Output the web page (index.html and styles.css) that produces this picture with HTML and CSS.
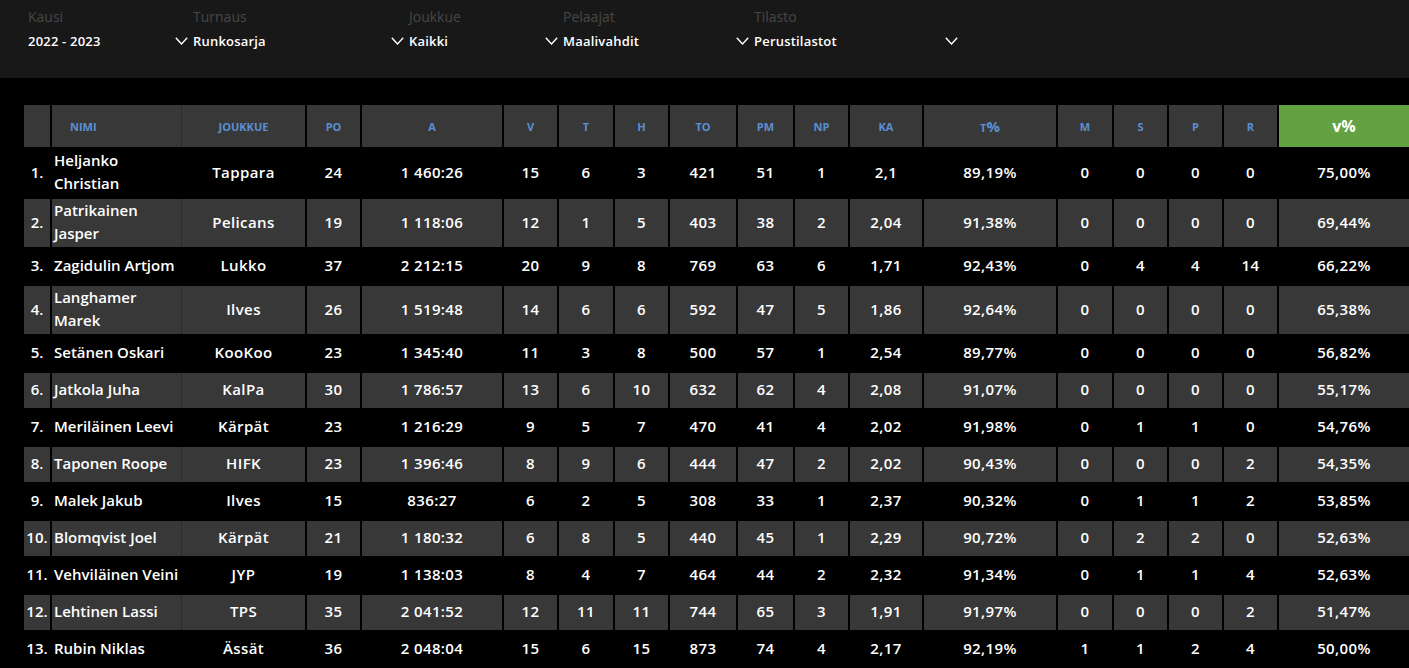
FILE: index.html
```html
<!DOCTYPE html>
<html lang="fi">
<head>
<meta charset="utf-8">
<title>Tilastot</title>
<link rel="stylesheet" href="styles.css">
</head>
<body>
<header class="filters">
  <div class="filter f-kausi">
    <div class="label">Kausi</div>
    <div class="select"><span>2022 - 2023</span><svg class="chev" viewBox="0 0 13 8"><polyline points="0.8,0.8 6.5,7 12.2,0.8"/></svg></div>
  </div>
  <div class="filter f-turnaus">
    <div class="label">Turnaus</div>
    <div class="select"><span>Runkosarja</span><svg class="chev" viewBox="0 0 13 8"><polyline points="0.8,0.8 6.5,7 12.2,0.8"/></svg></div>
  </div>
  <div class="filter f-joukkue">
    <div class="label">Joukkue</div>
    <div class="select"><span>Kaikki</span><svg class="chev" viewBox="0 0 13 8"><polyline points="0.8,0.8 6.5,7 12.2,0.8"/></svg></div>
  </div>
  <div class="filter f-pelaajat">
    <div class="label">Pelaajat</div>
    <div class="select"><span>Maalivahdit</span><svg class="chev" viewBox="0 0 13 8"><polyline points="0.8,0.8 6.5,7 12.2,0.8"/></svg></div>
  </div>
  <div class="filter f-tilasto">
    <div class="label">Tilasto</div>
    <div class="select"><span>Perustilastot</span><svg class="chev" viewBox="0 0 13 8"><polyline points="0.8,0.8 6.5,7 12.2,0.8"/></svg></div>
  </div>
</header>

<main class="stats">
  <div class="row head">
    <div class="c rank"></div>
    <div class="c name">NIMI</div>
    <div class="c team">JOUKKUE</div>
    <div class="c po">PO</div>
    <div class="c a">A</div>
    <div class="c v">V</div>
    <div class="c t">T</div>
    <div class="c h">H</div>
    <div class="c to">TO</div>
    <div class="c pm">PM</div>
    <div class="c np">NP</div>
    <div class="c ka">KA</div>
    <div class="c tp big"><span class="sc">T</span>%</div>
    <div class="c m">M</div>
    <div class="c s">S</div>
    <div class="c p">P</div>
    <div class="c r">R</div>
    <div class="c vp active">v%</div>
  </div>

  <div class="row"><div class="c rank">1.</div><div class="c name">Heljanko Christian</div><div class="c team">Tappara</div><div class="c po">24</div><div class="c a">1 460:26</div><div class="c v">15</div><div class="c t">6</div><div class="c h">3</div><div class="c to">421</div><div class="c pm">51</div><div class="c np">1</div><div class="c ka">2,1</div><div class="c tp">89,19%</div><div class="c m">0</div><div class="c s">0</div><div class="c p">0</div><div class="c r">0</div><div class="c vp">75,00%</div></div>

  <div class="row alt"><div class="c rank">2.</div><div class="c name">Patrikainen Jasper</div><div class="c team">Pelicans</div><div class="c po">19</div><div class="c a">1 118:06</div><div class="c v">12</div><div class="c t">1</div><div class="c h">5</div><div class="c to">403</div><div class="c pm">38</div><div class="c np">2</div><div class="c ka">2,04</div><div class="c tp">91,38%</div><div class="c m">0</div><div class="c s">0</div><div class="c p">0</div><div class="c r">0</div><div class="c vp">69,44%</div></div>

  <div class="row"><div class="c rank">3.</div><div class="c name">Zagidulin Artjom</div><div class="c team">Lukko</div><div class="c po">37</div><div class="c a">2 212:15</div><div class="c v">20</div><div class="c t">9</div><div class="c h">8</div><div class="c to">769</div><div class="c pm">63</div><div class="c np">6</div><div class="c ka">1,71</div><div class="c tp">92,43%</div><div class="c m">0</div><div class="c s">4</div><div class="c p">4</div><div class="c r">14</div><div class="c vp">66,22%</div></div>

  <div class="row alt"><div class="c rank">4.</div><div class="c name">Langhamer Marek</div><div class="c team">Ilves</div><div class="c po">26</div><div class="c a">1 519:48</div><div class="c v">14</div><div class="c t">6</div><div class="c h">6</div><div class="c to">592</div><div class="c pm">47</div><div class="c np">5</div><div class="c ka">1,86</div><div class="c tp">92,64%</div><div class="c m">0</div><div class="c s">0</div><div class="c p">0</div><div class="c r">0</div><div class="c vp">65,38%</div></div>

  <div class="row"><div class="c rank">5.</div><div class="c name">Setänen Oskari</div><div class="c team">KooKoo</div><div class="c po">23</div><div class="c a">1 345:40</div><div class="c v">11</div><div class="c t">3</div><div class="c h">8</div><div class="c to">500</div><div class="c pm">57</div><div class="c np">1</div><div class="c ka">2,54</div><div class="c tp">89,77%</div><div class="c m">0</div><div class="c s">0</div><div class="c p">0</div><div class="c r">0</div><div class="c vp">56,82%</div></div>

  <div class="row alt"><div class="c rank">6.</div><div class="c name">Jatkola Juha</div><div class="c team">KalPa</div><div class="c po">30</div><div class="c a">1 786:57</div><div class="c v">13</div><div class="c t">6</div><div class="c h">10</div><div class="c to">632</div><div class="c pm">62</div><div class="c np">4</div><div class="c ka">2,08</div><div class="c tp">91,07%</div><div class="c m">0</div><div class="c s">0</div><div class="c p">0</div><div class="c r">0</div><div class="c vp">55,17%</div></div>

  <div class="row"><div class="c rank">7.</div><div class="c name">Meriläinen Leevi</div><div class="c team">Kärpät</div><div class="c po">23</div><div class="c a">1 216:29</div><div class="c v">9</div><div class="c t">5</div><div class="c h">7</div><div class="c to">470</div><div class="c pm">41</div><div class="c np">4</div><div class="c ka">2,02</div><div class="c tp">91,98%</div><div class="c m">0</div><div class="c s">1</div><div class="c p">1</div><div class="c r">0</div><div class="c vp">54,76%</div></div>

  <div class="row alt"><div class="c rank">8.</div><div class="c name">Taponen Roope</div><div class="c team">HIFK</div><div class="c po">23</div><div class="c a">1 396:46</div><div class="c v">8</div><div class="c t">9</div><div class="c h">6</div><div class="c to">444</div><div class="c pm">47</div><div class="c np">2</div><div class="c ka">2,02</div><div class="c tp">90,43%</div><div class="c m">0</div><div class="c s">0</div><div class="c p">0</div><div class="c r">2</div><div class="c vp">54,35%</div></div>

  <div class="row"><div class="c rank">9.</div><div class="c name">Malek Jakub</div><div class="c team">Ilves</div><div class="c po">15</div><div class="c a">836:27</div><div class="c v">6</div><div class="c t">2</div><div class="c h">5</div><div class="c to">308</div><div class="c pm">33</div><div class="c np">1</div><div class="c ka">2,37</div><div class="c tp">90,32%</div><div class="c m">0</div><div class="c s">1</div><div class="c p">1</div><div class="c r">2</div><div class="c vp">53,85%</div></div>

  <div class="row alt"><div class="c rank">10.</div><div class="c name">Blomqvist Joel</div><div class="c team">Kärpät</div><div class="c po">21</div><div class="c a">1 180:32</div><div class="c v">6</div><div class="c t">8</div><div class="c h">5</div><div class="c to">440</div><div class="c pm">45</div><div class="c np">1</div><div class="c ka">2,29</div><div class="c tp">90,72%</div><div class="c m">0</div><div class="c s">2</div><div class="c p">2</div><div class="c r">0</div><div class="c vp">52,63%</div></div>

  <div class="row"><div class="c rank">11.</div><div class="c name">Vehviläinen Veini</div><div class="c team">JYP</div><div class="c po">19</div><div class="c a">1 138:03</div><div class="c v">8</div><div class="c t">4</div><div class="c h">7</div><div class="c to">464</div><div class="c pm">44</div><div class="c np">2</div><div class="c ka">2,32</div><div class="c tp">91,34%</div><div class="c m">0</div><div class="c s">1</div><div class="c p">1</div><div class="c r">4</div><div class="c vp">52,63%</div></div>

  <div class="row alt"><div class="c rank">12.</div><div class="c name">Lehtinen Lassi</div><div class="c team">TPS</div><div class="c po">35</div><div class="c a">2 041:52</div><div class="c v">12</div><div class="c t">11</div><div class="c h">11</div><div class="c to">744</div><div class="c pm">65</div><div class="c np">3</div><div class="c ka">1,91</div><div class="c tp">91,97%</div><div class="c m">0</div><div class="c s">0</div><div class="c p">0</div><div class="c r">2</div><div class="c vp">51,47%</div></div>

  <div class="row"><div class="c rank">13.</div><div class="c name">Rubin Niklas</div><div class="c team">Ässät</div><div class="c po">36</div><div class="c a">2 048:04</div><div class="c v">15</div><div class="c t">6</div><div class="c h">15</div><div class="c to">873</div><div class="c pm">74</div><div class="c np">4</div><div class="c ka">2,17</div><div class="c tp">92,19%</div><div class="c m">1</div><div class="c s">1</div><div class="c p">2</div><div class="c r">4</div><div class="c vp">50,00%</div></div>
</main>
</body>
</html>
```

FILE: styles.css
```css
* { box-sizing: border-box; }

html, body {
  margin: 0;
  padding: 0;
  background: #000;
  color: #fff;
  font-family: "Open Sans", "Liberation Sans", sans-serif;
}

/* ---------- filter bar ---------- */
.filters {
  display: flex;
  gap: 5px;
  height: 78px;
  padding: 7px 0 0 28px;
  background: #181818;
}

.filter .label {
  font-size: 14px;
  line-height: 20px;
  color: #474747;
}

.filter .select {
  display: flex;
  align-items: center;
  justify-content: space-between;
  margin-top: 4px;
  height: 20px;
  font-size: 13px;
  font-weight: 600;
  letter-spacing: 0.2px;
  color: #fff;
}

.chev {
  width: 13px;
  height: 8px;
  fill: none;
  stroke: #fff;
  stroke-width: 1.4;
}

.f-kausi   { width: 160px; }
.f-turnaus { width: 211px; }
.f-joukkue { width: 149px; }
.f-pelaajat { width: 186px; }
.f-tilasto { width: 204px; }

/* ---------- table ---------- */
.stats {
  display: flex;
  flex-direction: column;
  gap: 2px;
  padding: 27px 0 0 24px;
}

.row {
  display: flex;
  gap: 2px;
  min-height: 35px;
  font-size: 15px;
  font-weight: 600;
  line-height: 23px;
}

.c {
  flex: none;
  display: flex;
  align-items: center;
  justify-content: center;
  text-align: center;
  white-space: nowrap;
  padding-bottom: 2px;
  letter-spacing: 0.4px;
}

.row.alt .c,
.row.head .c { background: #383838; }

.row.head {
  height: 42px;
  font-size: 11px;
  font-weight: 700;
  color: #5b8fd2;
}
.row.head .c { padding-bottom: 0; letter-spacing: 0; }

.row.head .c.big { font-size: 15px; }
.row.head .sc { font-size: 11px; margin-top: 2px; }
.row.head .c.active {
  background: #63a142;
  color: #fff;
  font-size: 16px;
}

.rank { width: 26px; letter-spacing: 0; }
.name {
  width: 130px;
  justify-content: flex-start;
  text-align: left;
  white-space: normal;
  padding: 0 0 2px 2px;
  letter-spacing: 0;
  border-right: 1px solid transparent;
}
.row.alt .name,
.row.head .name { border-right-color: #2b2b2b; }
.row.head .name { padding-left: 18px; }
.team { width: 123px; margin-left: -2px; }
.po { width: 53px; }
.a  { width: 140px; }
.v  { width: 53px; }
.t  { width: 54px; }
.h  { width: 53px; }
.to { width: 66px; }
.pm { width: 55px; }
.np { width: 53px; }
.ka { width: 72px; }
.tp { width: 132px; }
.m  { width: 54px; }
.s  { width: 53px; }
.p  { width: 53px; }
.r  { width: 53px; }
.vp { width: 130px; }
```
